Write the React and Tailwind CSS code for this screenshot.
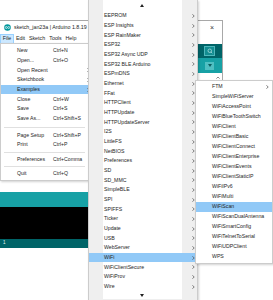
import React from "react";

const fileItems = [
  { t: "New", k: "Ctrl+N" },
  { t: "Open...", k: "Ctrl+O" },
  { t: "Open Recent", arrow: true },
  { t: "Sketchbook", arrow: true },
  { t: "Examples", arrow: true, hi: true },
  { t: "Close", k: "Ctrl+W" },
  { t: "Save", k: "Ctrl+S" },
  { t: "Save As...", k: "Ctrl+Shift+S" },
  { sep: "h-[7px]" },
  { t: "Page Setup", k: "Ctrl+Shift+P" },
  { t: "Print", k: "Ctrl+P" },
  { sep: "h-[5px]" },
  { t: "Preferences", k: "Ctrl+Comma" },
  { sep: "h-[4px]" },
  { t: "Quit", k: "Ctrl+Q" },
];

const examples = [
  "EEPROM", "ESP Insights", "ESP RainMaker", "ESP32", "ESP32 Async UDP", "ESP32 BLE Arduino",
  "ESPmDNS", "Ethernet", "FFat", "HTTPClient", "HTTPUpdate", "HTTPUpdateServer", "I2S",
  "LittleFS", "NetBIOS", "Preferences", "SD", "SD_MMC", "SimpleBLE", "SPI", "SPIFFS",
  "Ticker", "Update", "USB", "WebServer", "WiFi", "WiFiClientSecure", "WiFiProv", "Wire",
];

const wifi = [
  "FTM", "SimpleWiFiServer", "WiFiAccessPoint", "WiFiBlueToothSwitch", "WiFiClient",
  "WiFiClientBasic", "WiFiClientConnect", "WiFiClientEnterprise", "WiFiClientEvents",
  "WiFiClientStaticIP", "WiFiIPv6", "WiFiMulti", "WiFiScan", "WiFiScanDualAntenna",
  "WiFiSmartConfig", "WiFiTelnetToSerial", "WiFiUDPClient", "WPS",
];

function Chevron() {
  return (
    <svg width="3" height="4" viewBox="0 0 3 4" className="shrink-0">
      <polyline points="0.5,0.3 2.2,2 0.5,3.7" fill="none" stroke="#444" strokeWidth="0.7" />
    </svg>
  );
}

function ArduinoIcon() {
  return (
    <svg width="7" height="7" viewBox="0 0 14 14" className="shrink-0">
      <circle cx="7" cy="7" r="6.6" fill="#00979c" />
      <circle cx="4.6" cy="7" r="2" fill="none" stroke="#fff" strokeWidth="1.3" />
      <circle cx="9.4" cy="7" r="2" fill="none" stroke="#fff" strokeWidth="1.3" />
    </svg>
  );
}

function ExRow({ hi, h, children, arrow }) {
  return (
    <div className={`${h} shrink-0 flex items-stretch ${hi ? "bg-[#91c9f7]" : ""}`}>
      <div className={`w-[14px] ${hi ? "" : "bg-[#efefef]"}`} />
      <div className={`flex-1 flex items-center ${hi ? "" : "bg-white"}`}>{children}</div>
      <div className={`w-[15px] flex items-center justify-end pr-[2px] ${hi ? "" : "bg-[#efefef]"}`}>
        {arrow && <Chevron />}
      </div>
    </div>
  );
}

export default function App() {
  return (
    <div
      className="relative w-[273px] h-[300px] overflow-hidden bg-white text-[5.2px] leading-none text-[#1e1e1e]"
      style={{ fontFamily: '"Liberation Sans", Arial, sans-serif' }}
    >
      {/* Arduino IDE window */}
      <div className="absolute left-0 top-[20px] w-[223px] h-[228px] flex flex-col border-t border-r border-[#a8a8a8] bg-white">
        <div className="h-[13px] flex items-center pl-[4px] pr-[8px] shrink-0">
          <ArduinoIcon />
          <span className="ml-[3px] text-[5.3px]">sketch_jan23a | Arduino 1.8.19</span>
          <span className="ml-auto text-[7px] text-[#333]">×</span>
        </div>
        <div className="h-[10px] flex items-stretch shrink-0 text-[5.3px]">
          <div className="w-[14px] flex items-center justify-center bg-[#cce8ff] border border-[#99d1ff]">File</div>
          <div className="w-[13px] flex items-center justify-center">Edit</div>
          <div className="w-[20px] flex items-center justify-center">Sketch</div>
          <div className="w-[17px] flex items-center justify-center">Tools</div>
          <div className="w-[14px] flex items-center justify-center">Help</div>
        </div>
        <div className="h-[14px] bg-[#006468] flex items-center justify-end pr-[7px] shrink-0">
          <div className="w-[11px] h-[10px] bg-[#138d91] border border-[#4fb8bb] flex items-center justify-center">
            <svg width="6" height="6" viewBox="0 0 12 12">
              <circle cx="5.5" cy="5.5" r="3.5" fill="none" stroke="#bfe6e7" strokeWidth="1.4" />
              <line x1="8" y1="8" x2="10.5" y2="10.5" stroke="#bfe6e7" strokeWidth="1.4" />
            </svg>
          </div>
        </div>
        <div className="h-[15px] bg-[#17a1a5] flex items-center justify-end pr-[8px] shrink-0">
          <div className="w-[9px] h-[8px] bg-[#4fbfc2] flex items-center justify-center">
            <svg width="4" height="3" viewBox="0 0 4 3">
              <polygon points="0,0 4,0 2,3" fill="#0c5c5f" />
            </svg>
          </div>
        </div>
        <div className="flex-1 bg-white flex justify-end pr-[2px] pt-[3px]">
          <svg width="4" height="3" viewBox="0 0 4 3">
            <polyline points="0.4,2.6 2,1 3.6,2.6" fill="none" stroke="#555" strokeWidth="0.7" />
          </svg>
        </div>
        <div className="h-[15px] bg-[#17a1a5] shrink-0" />
        <div className="h-[32px] bg-black shrink-0" />
        <div className="h-[9px] bg-[#006468] flex items-center px-[3px] text-[#e8f4f4] text-[4.5px] shrink-0">
          <span>1</span>
          <span className="ml-auto">ESP32 Dev Module on COM3</span>
        </div>
      </div>

      {/* File menu */}
      <div className="absolute left-0 top-[43px] w-[89px] bg-white border border-[#cccccc] pt-[2px] pb-[2px] flex flex-col shadow-[1px_1px_2px_rgba(0,0,0,0.18)]">
        {fileItems.map((it, i) =>
          it.sep ? (
            <div key={i} className={`${it.sep} flex items-center px-[3px]`}>
              <div className="h-px w-full bg-[#e0e0e0]" />
            </div>
          ) : (
            <div
              key={i}
              className={`h-[9.7px] flex items-center pl-[16px] pr-0 ${it.hi ? "bg-[#91c9f7]" : ""}`}
            >
              <span className="w-[36px] whitespace-nowrap">{it.t}</span>
              <span className="whitespace-nowrap">{it.k || ""}</span>
              {it.arrow && (
                <span className="ml-auto mr-[-2px]">
                  <Chevron />
                </span>
              )}
            </div>
          )
        )}
      </div>

      {/* Examples submenu */}
      <div className="absolute left-[88px] top-0 w-[110px] h-[300px] bg-[#efefef] border-x border-[#cccccc] flex flex-col shadow-[1px_1px_2px_rgba(0,0,0,0.18)]">
        <ExRow h="h-[11px]">
          <div className="flex-1 flex justify-center pr-[2px]">
            <svg width="4" height="3" viewBox="0 0 4 3">
              <polygon points="0,3 4,3 2,0" fill="#222" />
            </svg>
          </div>
        </ExRow>
        {examples.map((e) => (
          <ExRow key={e} h="h-[9.68px]" hi={e === "WiFi"} arrow>
            <span className="whitespace-nowrap pl-px">{e}</span>
          </ExRow>
        ))}
        <ExRow h="h-[8px]">
          <div className="flex-1 flex justify-center pr-[2px]">
            <svg width="4" height="3" viewBox="0 0 4 3">
              <polygon points="0,0 4,0 2,3" fill="#222" />
            </svg>
          </div>
        </ExRow>
      </div>

      {/* WiFi submenu */}
      <div className="absolute left-[195px] top-[80px] w-[78px] bg-white border border-[#cccccc] pt-[1px] pb-[1px] flex flex-col shadow-[1px_1px_2px_rgba(0,0,0,0.18)]">
        {wifi.map((w) => (
          <div
            key={w}
            className={`h-[10px] flex items-center pl-[16px] pr-[3px] ${w === "WiFiScan" ? "bg-[#91c9f7]" : ""}`}
          >
            <span className="whitespace-nowrap">{w}</span>
            {w === "FTM" && (
              <span className="ml-auto">
                <Chevron />
              </span>
            )}
          </div>
        ))}
      </div>
    </div>
  );
}
